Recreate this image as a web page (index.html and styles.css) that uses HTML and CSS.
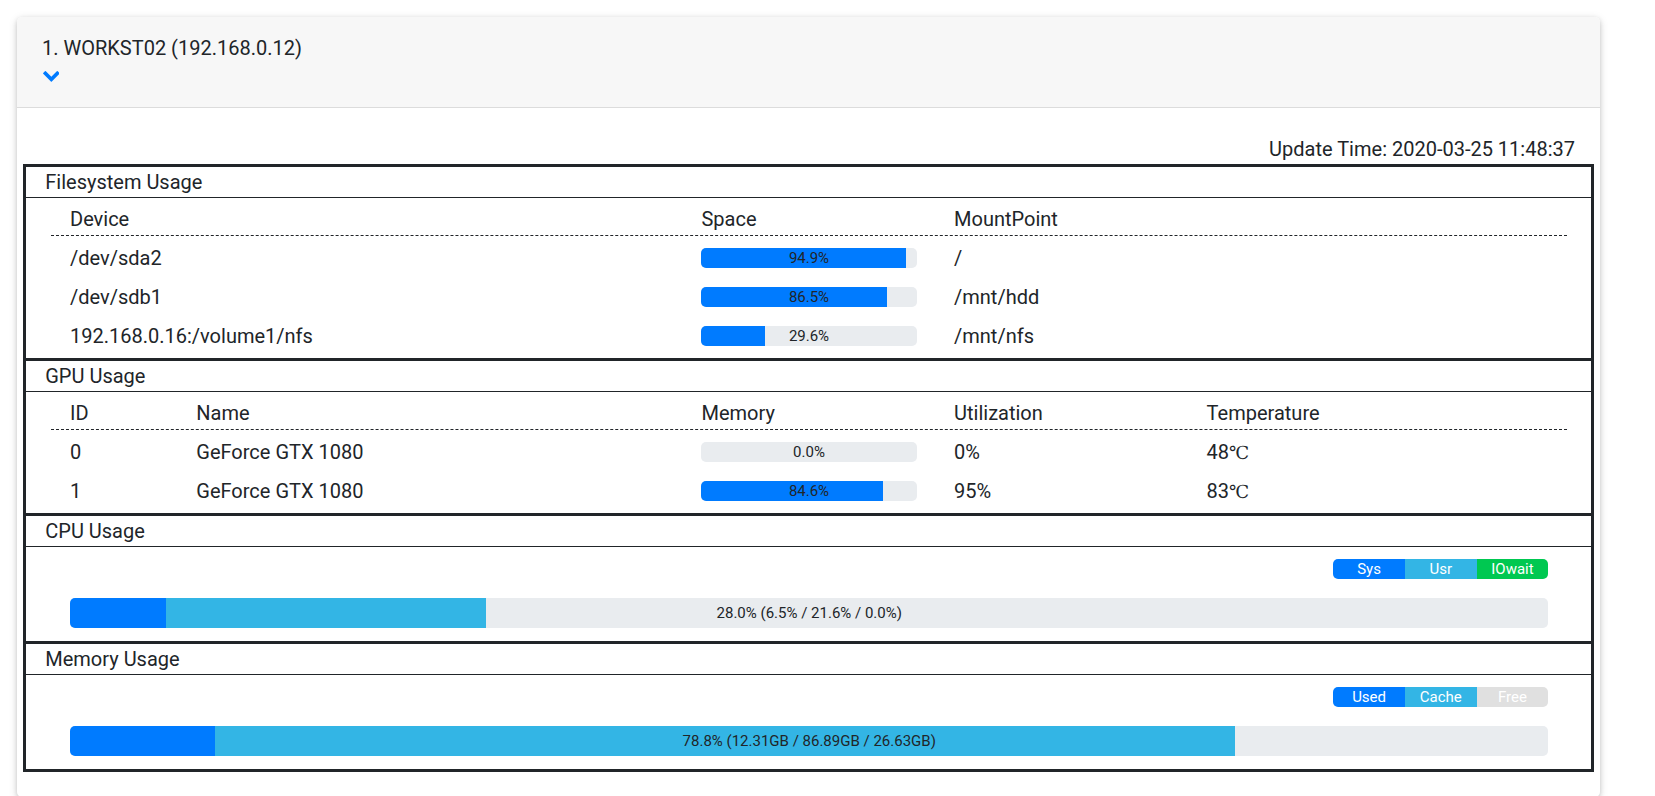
FILE: index.html
```html
<!DOCTYPE html>
<html>
<head>
<meta charset="utf-8">
<link rel="stylesheet" href="styles.css">
</head>
<body>
<div class="page">
  <div class="card">
    <div class="card-header">
      <div class="host-title">1. WORKST02 (192.168.0.12)</div>
      <svg class="toggle" viewBox="90 533 1612 1035" width="16.7" height="10.7"><path fill="#007bff" d="M1683 808l-742 741q-19 19-45 19t-45-19l-742-741q-19-19-19-45.5t19-45.5l166-165q19-19 45-19t45 19l531 531 531-531q19-19 45-19t45 19l166 165q19 19 19 45.5t-19 45.5z"/></svg>
    </div>
    <div class="card-body">
      <div class="update-time">Update Time: 2020-03-25 11:48:37</div>
      <div class="stats">
        <section class="stat">
          <div class="stat-title">Filesystem Usage</div>
          <div class="stat-table">
            <div class="trow thead fs-cols">
              <div class="cell">Device</div>
              <div class="cell">Space</div>
              <div class="cell">MountPoint</div>
            </div>
            <div class="tbody">
              <div class="trow fs-cols">
                <div class="cell">/dev/sda2</div>
                <div class="cell bar-cell"><div class="bar"><div class="bar-fill sys" style="width:94.9%"></div><span class="bar-label">94.9%</span></div></div>
                <div class="cell">/</div>
              </div>
              <div class="trow fs-cols">
                <div class="cell">/dev/sdb1</div>
                <div class="cell bar-cell"><div class="bar"><div class="bar-fill sys" style="width:86.5%"></div><span class="bar-label">86.5%</span></div></div>
                <div class="cell">/mnt/hdd</div>
              </div>
              <div class="trow fs-cols">
                <div class="cell">192.168.0.16:/volume1/nfs</div>
                <div class="cell bar-cell"><div class="bar"><div class="bar-fill sys" style="width:29.6%"></div><span class="bar-label">29.6%</span></div></div>
                <div class="cell">/mnt/nfs</div>
              </div>
            </div>
          </div>
        </section>
        <section class="stat">
          <div class="stat-title">GPU Usage</div>
          <div class="stat-table">
            <div class="trow thead gpu-cols">
              <div class="cell">ID</div>
              <div class="cell">Name</div>
              <div class="cell">Memory</div>
              <div class="cell">Utilization</div>
              <div class="cell">Temperature</div>
            </div>
            <div class="tbody">
              <div class="trow gpu-cols">
                <div class="cell">0</div>
                <div class="cell">GeForce GTX 1080</div>
                <div class="cell bar-cell"><div class="bar"><div class="bar-fill sys" style="width:0%"></div><span class="bar-label">0.0%</span></div></div>
                <div class="cell">0%</div>
                <div class="cell">48<span class="deg">℃</span></div>
              </div>
              <div class="trow gpu-cols">
                <div class="cell">1</div>
                <div class="cell">GeForce GTX 1080</div>
                <div class="cell bar-cell"><div class="bar"><div class="bar-fill sys" style="width:84.6%"></div><span class="bar-label">84.6%</span></div></div>
                <div class="cell">95%</div>
                <div class="cell">83<span class="deg">℃</span></div>
              </div>
            </div>
          </div>
        </section>
        <section class="stat">
          <div class="stat-title">CPU Usage</div>
          <div class="usage">
            <div class="legend">
              <span class="sys">Sys</span><span class="usr">Usr</span><span class="iowait">IOwait</span>
            </div>
            <div class="bar big">
              <div class="bar-fill sys" style="width:6.5%"></div>
              <div class="bar-fill usr" style="width:21.6%"></div>
              <div class="bar-fill iowait" style="width:0%"></div>
              <span class="bar-label">28.0% (6.5% / 21.6% / 0.0%)</span>
            </div>
          </div>
        </section>
        <section class="stat">
          <div class="stat-title">Memory Usage</div>
          <div class="usage">
            <div class="legend">
              <span class="sys">Used</span><span class="usr">Cache</span><span class="free">Free</span>
            </div>
            <div class="bar big">
              <div class="bar-fill sys" style="width:9.78%"></div>
              <div class="bar-fill usr" style="width:69.05%"></div>
              <span class="bar-label">78.8% (12.31GB / 86.89GB / 26.63GB)</span>
            </div>
          </div>
        </section>
      </div>
    </div>
  </div>
</div>
</body>
</html>
```

FILE: styles.css
```css
* { box-sizing: border-box; }
html, body { margin: 0; background: #fff; }
body {
  font-family: Roboto, "Noto Sans", sans-serif;
  font-size: 20px;
  line-height: 30px;
  color: #212529;
}
.page { padding: 17px 55px 0 17px; }
.card {
  background: #fff;
  border-radius: 5px;
  box-shadow: 0 2px 5px 0 rgba(0,0,0,.16), 0 2px 10px 0 rgba(0,0,0,.12);
}
.card-header {
  background: #f7f7f7;
  border-bottom: 1px solid #dcdcdc;
  border-radius: 5px 5px 0 0;
  padding: 16px 25px 0 25px;
  height: 91px;
}
.host-title { line-height: 30px; }
.toggle { display: block; margin: 8px 0 0 0.5px; }
.card-body { padding: 26px 25px 25px; }
.update-time { text-align: right; line-height: 30px; }
.stats { margin: 0 -18.75px; border: 3px solid #212529; }
.stat + .stat { border-top: 3px solid #212529; }
.stat-title {
  padding: 0 19px;
  line-height: 30px;
  border-bottom: 1px solid #212529;
}
.stat-table { padding: 0 24px 0 25px; }
.trow { display: grid; }
.fs-cols { grid-template-columns: 5fr 2fr 5fr; }
.gpu-cols { grid-template-columns: 1fr 4fr 2fr 2fr 3fr; }
.cell { padding: 0 18.75px; white-space: nowrap; min-width: 0; }
.thead { padding: 6px 0 1px; border-bottom: 1px dashed #212529; }
.tbody { padding: 2px 0 3px; }
.tbody .cell { padding-top: 4.5px; padding-bottom: 4.5px; height: 39px; }
.bar-cell { display: flex; align-items: center; }
.deg { font-family: "DejaVu Serif", "Noto Sans CJK SC", serif; font-size: 18px; }
.bar {
  position: relative;
  display: flex;
  width: 100%;
  height: 20px;
  background: #e9ecef;
  border-radius: 5px;
  overflow: hidden;
}
.bar-fill { height: 100%; }
.sys { background: #007bff; }
.usr { background: #33b5e5; }
.iowait { background: #00c851; }
.free { background: #e0e0e0; }
.bar-label {
  position: absolute;
  left: 0; right: 0; top: 0; bottom: 0;
  text-align: center;
  font-size: 15px;
  line-height: 20px;
  color: #212529;
}
.usage { padding: 12px 42.5px 13px 44px; }
.legend {
  display: flex;
  width: 215px;
  height: 20px;
  margin-left: auto;
  border-radius: 5px;
  overflow: hidden;
  font-size: 15px;
  line-height: 20px;
  color: #fff;
  text-align: center;
}
.legend span { flex: 1; }
.bar.big { height: 30px; margin-top: 19px; }
.bar.big .bar-label { line-height: 30px; }
```
